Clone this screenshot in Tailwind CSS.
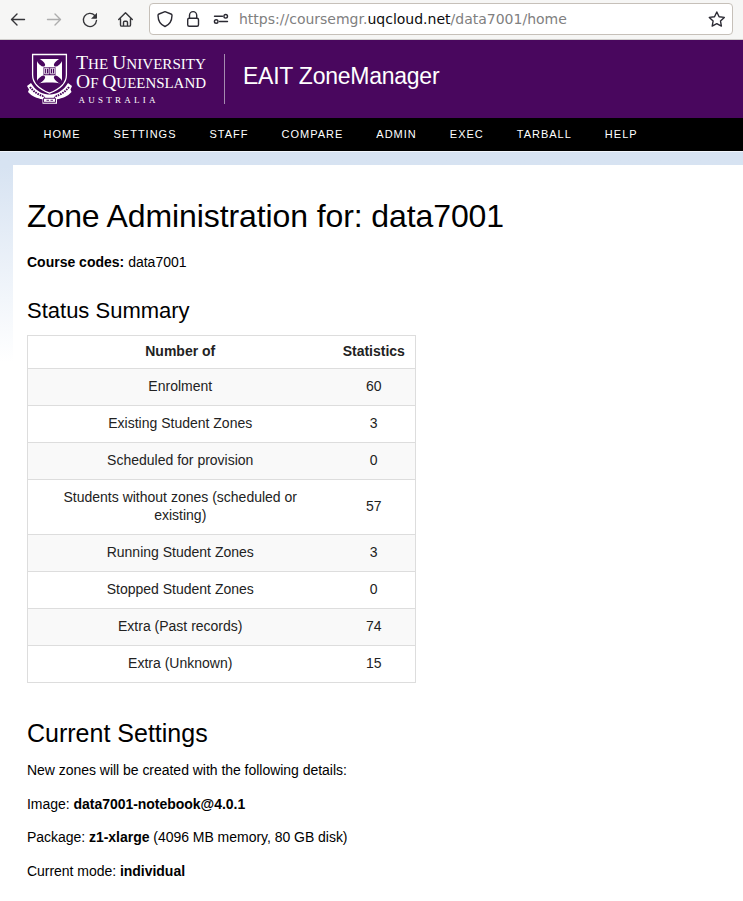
<!DOCTYPE html>
<html lang="en">
<head>
<meta charset="utf-8">
<title>EAIT ZoneManager</title>
<script src="https://cdn.jsdelivr.net/npm/@tailwindcss/browser@4"></script>
</head>
<body class="h-[901px] w-[743px] overflow-hidden bg-white font-['Liberation_Sans',sans-serif] text-[14px] leading-[18px] text-black">

<!-- Browser toolbar -->
<div class="flex h-10 items-start border-b border-[#cfcdcb] bg-[#f6f6f5]">
  <svg class="h-[39px] w-[149px] shrink-0" viewBox="0 0 149 39" fill="none" stroke="#353539" stroke-width="1.4" stroke-linecap="round" stroke-linejoin="round">
    <path d="M24.5 19.5H11.5M17 14l-5.5 5.5L17 25"/>
    <path stroke="#adadad" d="M47.5 19.5h13M55 14l5.500 5.500L55 25"/>
    <path d="M94.800 15.500A6.600 6.600 0 1 0 96.500 20.500"/>
    <path fill="#353539" stroke="none" d="M97 12.800v5.200a.7.700 0 0 1-.7.700H91z"/>
    <path d="M118.700 19.500l6.800-6.800 6.800 6.800M120.500 18.500v6.400a1.200 1.200 0 0 0 1.200 1.200h7.600a1.200 1.200 0 0 0 1.200-1.200v-6.400M123.500 26v-3.500a1.200 1.200 0 0 1 1.200-1.200h1.600a1.200 1.200 0 0 1 1.200 1.200V26"/>
  </svg>
  <div class="mt-[3px] flex h-8 w-[584px] items-center rounded-[4px] border border-[#c6c0b9] bg-white">
    <svg class="h-[30px] w-[89px] shrink-0" viewBox="150 4 89 30" fill="none" stroke="#2b2a33" stroke-width="1.400" stroke-linecap="round" stroke-linejoin="round">
      <path d="M165 11.700l6 2.300c.7.300 1 .8 1 1.500-.1 4.800-2.500 9.200-7 11-4.500-1.800-6.900-6.200-7-11 0-.7.300-1.200 1-1.500z"/>
      <rect x="187.700" y="18.200" width="10.800" height="8" rx="1.500"/>
      <path d="M189.500 18v-2.800a3.600 3.600 0 0 1 7.200 0V18"/>
      <path d="M214.500 16.300h8M219.500 21.500h8"/>
      <circle cx="225.700" cy="16.300" r="1.800"/><circle cx="216.200" cy="21.500" r="1.800"/>
    </svg>
    <div class="w-[464px] whitespace-nowrap font-['DejaVu_Sans',sans-serif] text-[14px] leading-[18px] text-[#808080]">https://coursemgr.<span class="text-[#0c0c0d]">uqcloud.net</span>/data7001/home</div>
    <svg class="h-[30px] w-[29px] shrink-0" viewBox="703 4 29 30" fill="none" stroke="#2b2a33" stroke-width="1.400" stroke-linejoin="round">
      <path d="M716.800 12l2.300 4.700 5.200.700-3.800 3.600.900 5.100-4.600-2.400-4.600 2.400.900-5.100-3.800-3.600 5.200-.700z"/>
    </svg>
  </div>
</div>

<!-- Site banner -->
<header class="flex h-[78px] bg-[#49075e]">
  <svg class="h-[78px] w-[243px] shrink-0" viewBox="0 40 243 78">
    <path fill="none" stroke="#fff" stroke-width="1.300" d="M32.600 54.500H66.400V75c0 9-7.500 14.500-16.900 18.200C40.100 89.500 32.600 84 32.600 75z"/>
    <path fill="#fff" d="M37 59h25v24.500c-7-1.500-18-1.500-25 0z"/>
    <g fill="#49075e">
      <ellipse cx="41" cy="62.700" rx="5" ry="2.300" transform="rotate(42 41 62.700)"/>
      <ellipse cx="58" cy="62.700" rx="5" ry="2.300" transform="rotate(-42 58 62.700)"/>
      <ellipse cx="41" cy="79.500" rx="5" ry="2.300" transform="rotate(-42 41 79.500)"/>
      <ellipse cx="58" cy="79.500" rx="5" ry="2.300" transform="rotate(42 58 79.500)"/>
      <path d="M36.500 58.500h2.500l-2.500 2.800zM62.500 58.500H60l2.500 2.800zM36.500 84v-3.500l3 3.500zM62.500 84v-3.500l-3 3.500zM43.500 67.200h12v8h-12z"/>
    </g>
    <path fill="none" stroke="#fff" stroke-width=".8" d="M44.600 68.300h4.200v5.500h-4.200zM50.400 68.300h4.200v5.500h-4.200zM46.500 68.500v5M52.500 68.500v5"/>
    <path fill="#fff" d="M27 86l4-3c4 6.500 9 10.500 17 11.500h3c8-1 13-5 17-11.500l4 3-1.500 3.500 1 2.500c-4 4.500-9 6.300-14.500 7.300v4.500H42.500v-4.500C37 98.300 32 96.500 28 92l1-2.500z"/>
    <path fill="none" stroke="#49075e" stroke-width="2" stroke-dasharray="1.600 .9" d="M30 87c4 5 8.500 7.800 13 9M69 87c-4 5-8.500 7.800-13 9"/>
    <path fill="none" stroke="#49075e" stroke-width=".9" d="M43.500 98.300h12v4h-12zM46.500 100.300h2.500M50.500 100.300h2.500M43 95.500l2 2.500M56 95.500l-2 2.500"/>
    <g fill="#fff" font-family="'Liberation Serif', serif" font-size="14.500">
      <text x="76" y="69" textLength="130" lengthAdjust="spacingAndGlyphs"><tspan font-size="19">T</tspan>HE <tspan font-size="19">U</tspan>NIVERSITY</text>
      <text x="76" y="88" textLength="130" lengthAdjust="spacingAndGlyphs"><tspan font-size="19">O</tspan>F <tspan font-size="19">Q</tspan>UEENSLAND</text>
      <text x="78.500" y="103.300" font-size="9" textLength="77" lengthAdjust="spacing">AUSTRALIA</text>
    </g>
    <path stroke="#a58baf" d="M224.500 54v50"/>
  </svg>
  <div class="pt-[22px] text-[23px] leading-7 tracking-[-0.25px] whitespace-nowrap text-white">EAIT ZoneManager</div>
</header>

<nav class="flex h-[33px] items-center gap-[33px] bg-black pb-[2px] pl-[43.500px] text-[11px] tracking-[1px] text-white">
  <span>HOME</span><span>SETTINGS</span><span>STAFF</span><span>COMPARE</span><span>ADMIN</span><span>EXEC</span><span>TARBALL</span><span>HELP</span>
</nav>

<div class="h-[750px] border-t border-[#f0f4fa] bg-linear-to-b from-[#d7e3f2] from-[14px] to-white to-[210px] pt-[13px] pl-[13px]">
  <main class="h-full bg-white pt-[31px] pl-[14px]">
    <h1 class="text-[32px] leading-10 tracking-[-0.1px] whitespace-nowrap">Zone Administration for: data7001</h1>
    <p class="mt-[17px]"><b>Course codes:</b> data7001</p>
    <h2 class="mt-[26px] text-[22px] leading-7">Status Summary</h2>
    <table class="mt-[10px] w-[388px] table-fixed border-collapse border border-[#dddddd] text-center text-[#222222] [&_td]:pb-[2px] [&_th]:pb-[2px] [&_tr]:border-b [&_tr]:border-[#dddddd]">
      <colgroup><col class="w-[305px]"><col class="w-[83px]"></colgroup>
      <thead><tr class="h-[33px]"><th>Number of</th><th>Statistics</th></tr></thead>
      <tbody>
        <tr class="h-[37px] bg-[#f9f9f9]"><td>Enrolment</td><td>60</td></tr>
        <tr class="h-[37px]"><td>Existing Student Zones</td><td>3</td></tr>
        <tr class="h-[37px] bg-[#f9f9f9]"><td>Scheduled for provision</td><td>0</td></tr>
        <tr class="h-[55px]"><td>Students without zones (scheduled or<br>existing)</td><td>57</td></tr>
        <tr class="h-[37px] bg-[#f9f9f9]"><td>Running Student Zones</td><td>3</td></tr>
        <tr class="h-[37px]"><td>Stopped Student Zones</td><td>0</td></tr>
        <tr class="h-[37px] bg-[#f9f9f9]"><td>Extra (Past records)</td><td>74</td></tr>
        <tr class="h-[37px]"><td>Extra (Unknown)</td><td>15</td></tr>
      </tbody>
    </table>
    <h2 class="mt-[35px] text-[25px] leading-[30px]">Current Settings</h2>
    <div class="mt-[13px] flex flex-col gap-[15.600px] tracking-[-0.03px]">
      <p>New zones will be created with the following details:</p>
      <p>Image: <b>data7001-notebook@4.0.1</b></p>
      <p>Package: <b>z1-xlarge</b> (4096 MB memory, 80 GB disk)</p>
      <p>Current mode: <b>individual</b></p>
    </div>
  </main>
</div>
</body>
</html>
